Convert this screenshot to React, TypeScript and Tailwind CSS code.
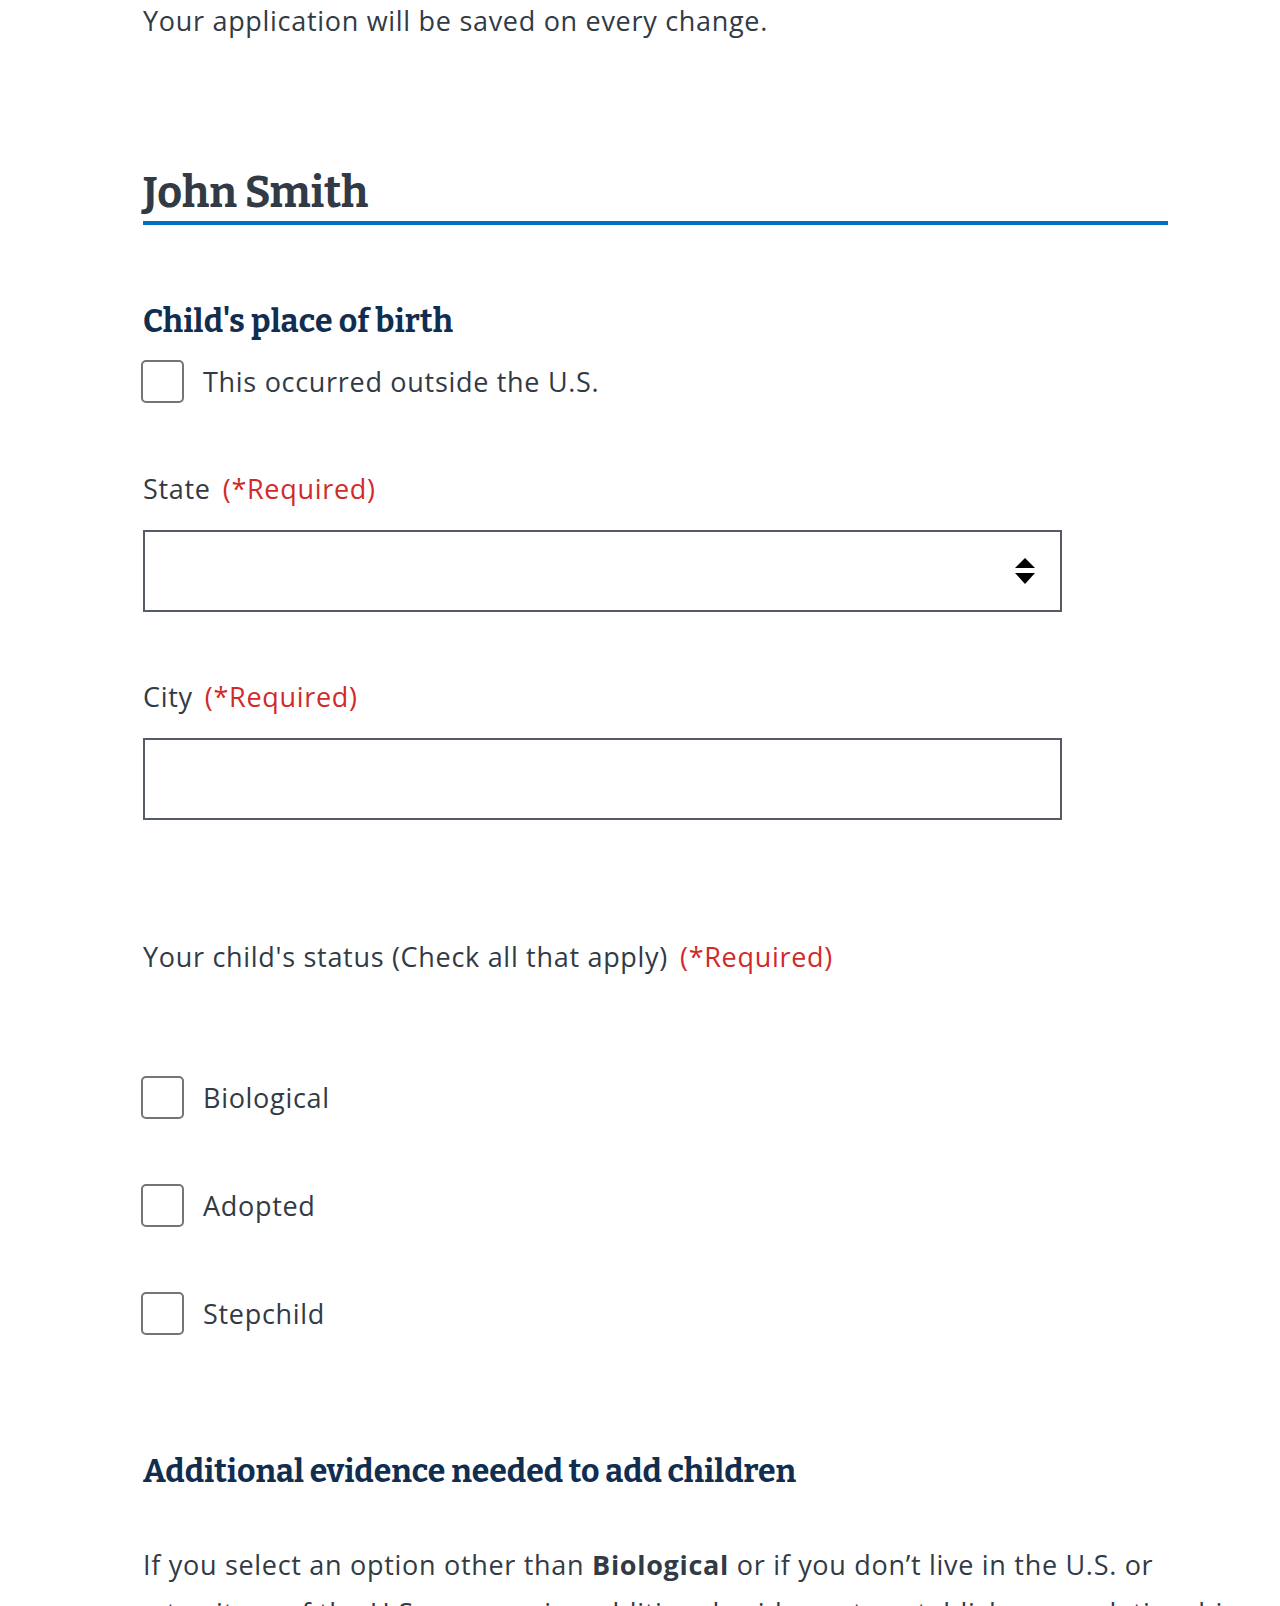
import React from "react";

const sans = "font-['Source_Sans_Pro','Open_Sans','Noto_Sans',sans-serif]";
const slab = "font-['Bitter','DejaVu_Serif',serif]";

const Required = () => <span className="ml-[12px] text-[#d12a2a]">(*Required)</span>;

const Checkbox = ({ label, className }: { label: string; className?: string }) => (
	<label className={`flex items-center ml-[-2px] ${className ?? ""}`}>
		<span className="block w-[43px] h-[43px] rounded-[5px] border-2 border-[#757575] bg-white shrink-0" />
		<span className="ml-[19px] text-[27px] leading-[43px] tracking-[0.7px] text-[#323a45]">{label}</span>
	</label>
);

const SelectArrows = () => (
	<svg width="22" height="30" viewBox="0 0 22 30" className="mr-[24px]">
		<path d="M11 2 L21 12 L1 12 Z" fill="#000" />
		<path d="M1 17 L21 17 L11 28 Z" fill="#000" />
	</svg>
);

export default function App() {
	return (
		<div className={`min-h-[1606px] bg-white ${sans} text-[#323a45]`}>
			<div className="pl-[143px] w-[1168px] text-[27px] tracking-[0.7px]">
				<p className="leading-[41px]">Your application will be saved on every change.</p>

				<h2 className={`${slab} mt-[128px] text-[43px] leading-[48px] font-bold tracking-normal text-[#323a45]`}>
					John Smith
				</h2>
				<div className="mt-[4px] h-[4px] bg-[#0071bb]" />

				<h3 className={`${slab} mt-[78px] text-[32px] leading-[36px] font-bold tracking-[0.2px] text-[#112e51]`}>
					Child's place of birth
				</h3>
				<Checkbox label="This occurred outside the U.S." className="mt-[21px]" />

				<div className="mt-[68px] leading-[36px]">
					State
					<Required />
				</div>
				<div className="mt-[23px] w-[919px] h-[82px] border-2 border-[#565c65] flex items-center justify-end">
					<SelectArrows />
				</div>

				<div className="mt-[67px] leading-[36px]">
					City
					<Required />
				</div>
				<div className="mt-[23px] w-[919px] h-[82px] border-2 border-[#565c65]" />

				<div className="mt-[119px] leading-[36px]">
					Your child's status (Check all that apply)
					<Required />
				</div>

				<Checkbox label="Biological" className="mt-[101px]" />
				<Checkbox label="Adopted" className="mt-[65px]" />
				<Checkbox label="Stepchild" className="mt-[65px]" />

				<h3 className={`${slab} mt-[118px] text-[32px] leading-[36px] font-bold tracking-normal text-[#112e51]`}>
					Additional evidence needed to add children
				</h3>

				<p className="mt-[52px] leading-[48px] whitespace-nowrap">
					If you select an option other than <strong className="font-bold">Biological</strong> or if you don’t live in
					the U.S. or
					<br />a territory of the U.S., we require additional evidence to establish your relationship.
				</p>
			</div>
		</div>
	);
}
